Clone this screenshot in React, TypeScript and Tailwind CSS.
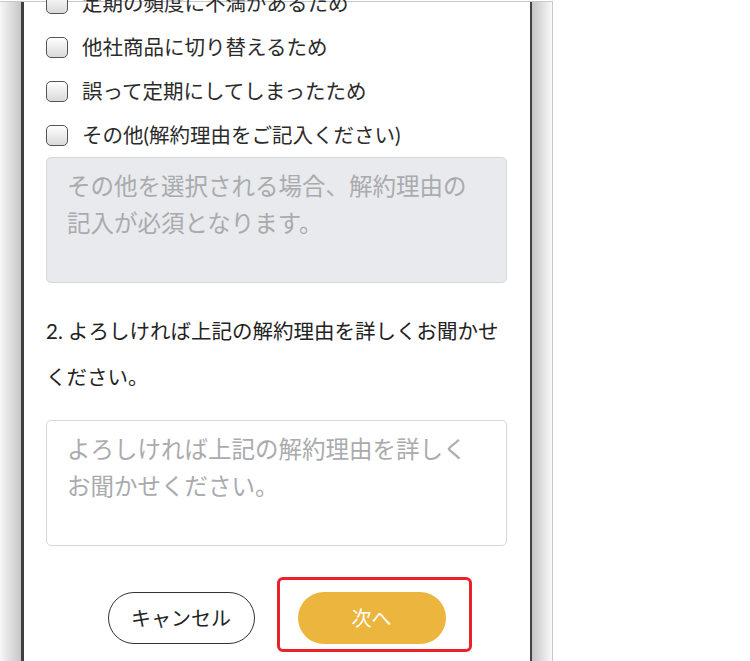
import React from 'react';

const reasons = [
  '定期の頻度に不満があるため',
  '他社商品に切り替えるため',
  '誤って定期にしてしまったため',
  'その他(解約理由をご記入ください)',
];

function Checkbox() {
  return (
    <span className="block h-[21px] w-[22px] shrink-0 rounded-[5px] border-[1.5px] border-[#555] bg-gradient-to-b from-white to-[#d9d9d9]" />
  );
}

export default function App() {
  return (
    <div
      className="h-[661px] w-[750px] overflow-hidden bg-white text-[#2b2b2b]"
      style={{ fontFamily: "Lato, 'Noto Sans CJK JP', sans-serif" }}
    >
      <div className="mt-px flex h-[700px] w-[553px] border-t border-r border-[#c9c9c9]">
        {/* left bezel */}
        <div className="w-[21px] shrink-0 bg-gradient-to-r from-[#f7f7f7] to-[#c6c6c6]" />
        <div className="w-[3px] shrink-0 bg-[#3f3f3f]" />

        {/* content */}
        <div className="w-[506px] shrink-0 bg-white pl-[22px] pr-[23px]">
          <div className="-mt-[21px] flex flex-col">
            {reasons.map((r) => (
              <label key={r} className="flex h-[44px] items-center">
                <Checkbox />
                <span className="ml-[14px] text-[20.5px] leading-none">{r}</span>
              </label>
            ))}
          </div>

          <textarea
            readOnly
            placeholder={'その他を選択される場合、解約理由の\n記入が必須となります。'}
            className="block h-[126px] w-full resize-none rounded-[5px] border border-[#d4d8dd] bg-[#e8eaed] pl-[20px] pr-[30px] pt-[10px] text-[23.5px] leading-[37px] outline-none placeholder:text-[#a9abae]"
          />

          <p className="mt-[25px] text-[20.5px] leading-[46px] text-[#222]">
            2. よろしければ上記の解約理由を詳しくお聞かせ
            <br />
            ください。
          </p>

          <textarea
            readOnly
            placeholder={'よろしければ上記の解約理由を詳しく\nお聞かせください。'}
            className="mt-[20px] block h-[126px] w-full resize-none rounded-[5px] border border-[#d4d8dd] bg-white pl-[20px] pr-[30px] pt-[10px] text-[23.5px] leading-[37px] outline-none placeholder:text-[#a9abae]"
          />

          <div className="mt-[46px] flex justify-center gap-[43px]">
            <button className="h-[52px] w-[147px] rounded-full border-[1.5px] border-[#333] bg-white text-[20px] text-[#222]">
              キャンセル
            </button>
            <div className="relative">
              <button className="h-[52px] w-[148px] rounded-full bg-[#ecb53d] text-[20px] text-white">
                次へ
              </button>
              <span className="pointer-events-none absolute -left-[21px] -right-[26px] -top-[15px] -bottom-[8px] rounded-[6px] border-[3px] border-[#e8212b]" />
            </div>
          </div>
        </div>

        {/* right bezel */}
        <div className="w-[2px] shrink-0 bg-[#444]" />
        <div className="w-[20px] shrink-0 bg-gradient-to-r from-[#c6c6c6] to-[#f9f9f9]" />
      </div>
    </div>
  );
}
